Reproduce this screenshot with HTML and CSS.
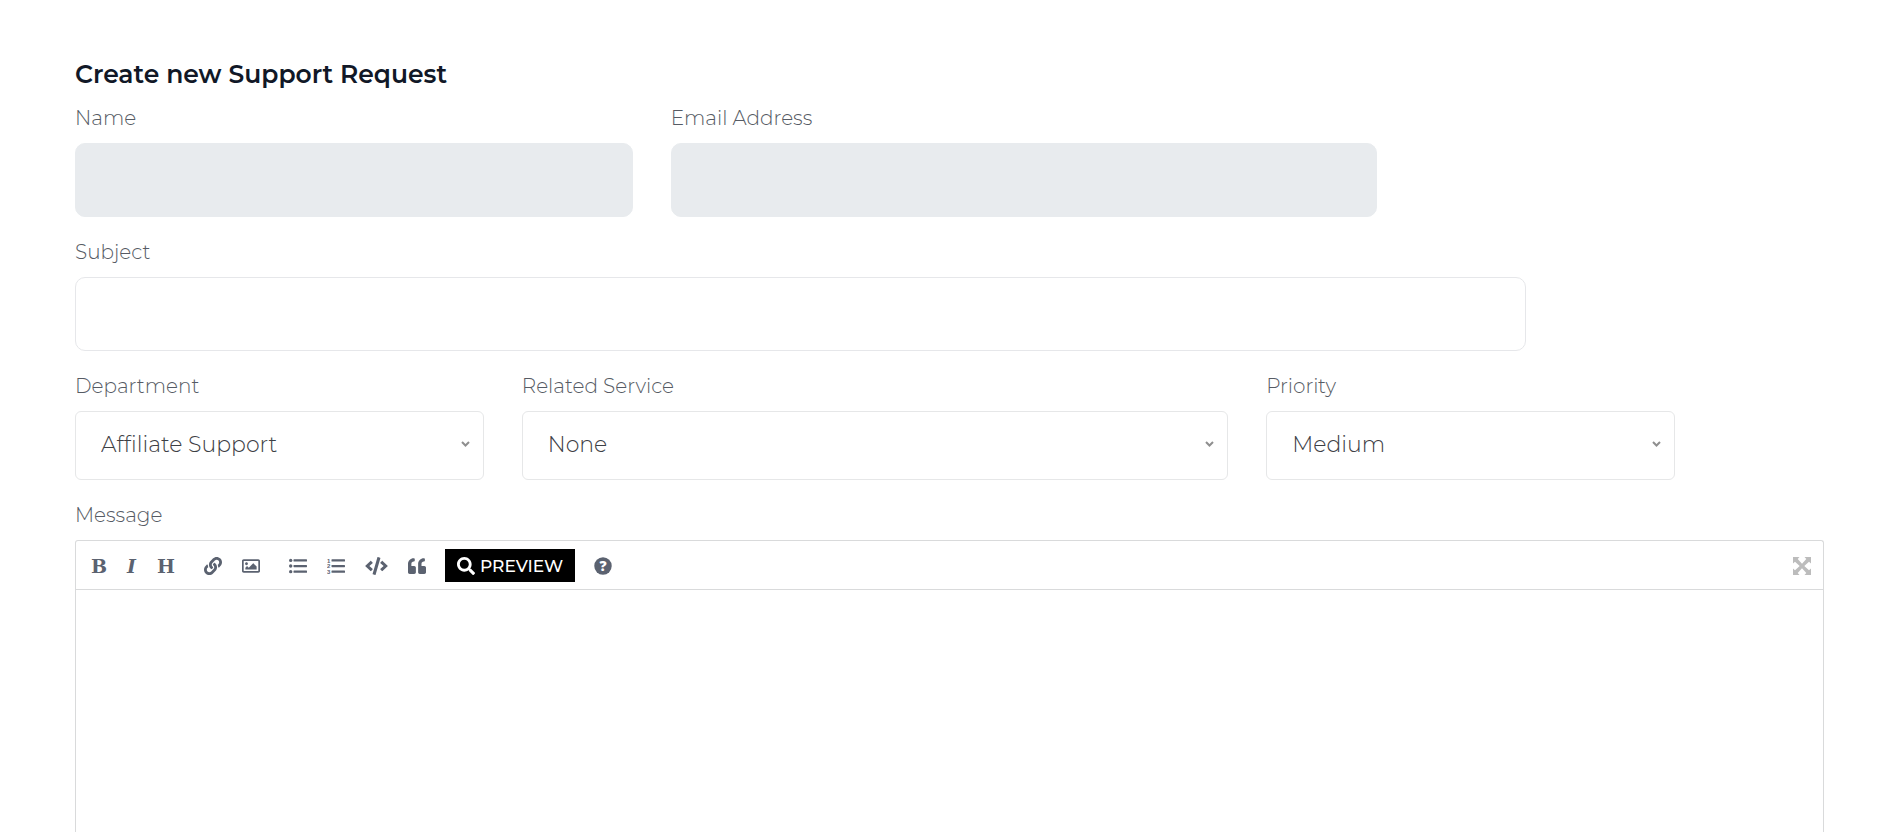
FILE: index.html
```html
<!DOCTYPE html>
<html lang="en">
<head>
<meta charset="utf-8">
<meta name="viewport" content="width=device-width, initial-scale=1">
<title>Create new Support Request</title>
<link rel="stylesheet" href="styles.css">
</head>
<body>
<main class="page">
  <h1 class="title">Create new Support Request</h1>
  <form class="form">
    <div class="field span-4">
      <label for="name">Name</label>
      <input class="control" id="name" type="text" disabled>
    </div>
    <div class="field span-5">
      <label for="email">Email Address</label>
      <input class="control" id="email" type="email" disabled>
    </div>
    <div class="field span-10 new-row">
      <label for="subject">Subject</label>
      <input class="control" id="subject" type="text">
    </div>
    <div class="field span-3 new-row">
      <label for="department">Department</label>
      <div class="select">
        <select id="department"><option>Affiliate Support</option></select>
        <svg class="chevron" viewBox="0 0 9 6" aria-hidden="true"><path d="M1 1l3.500 3.500L8 1"/></svg>
      </div>
    </div>
    <div class="field span-5">
      <label for="service">Related Service</label>
      <div class="select">
        <select id="service"><option>None</option></select>
        <svg class="chevron" viewBox="0 0 9 6" aria-hidden="true"><path d="M1 1l3.500 3.500L8 1"/></svg>
      </div>
    </div>
    <div class="field span-3">
      <label for="priority">Priority</label>
      <div class="select">
        <select id="priority"><option>Medium</option></select>
        <svg class="chevron" viewBox="0 0 9 6" aria-hidden="true"><path d="M1 1l3.500 3.500L8 1"/></svg>
      </div>
    </div>
    <div class="field field-message">
      <label for="message">Message</label>
      <div class="editor">
        <div class="toolbar">
          <div class="group">
            <button class="tool tool-bold" type="button" title="Bold">B</button>
            <button class="tool tool-italic" type="button" title="Italic">I</button>
            <button class="tool tool-heading" type="button" title="Heading">H</button>
          </div>
          <div class="group">
            <button class="tool" type="button" aria-label="Link"><svg class="icon" viewBox="0 0 512 512"><path d="M326.612 185.391c59.747 59.809 58.927 155.698.36 214.59-.11.12-.24.25-.36.37l-67.2 67.2c-59.27 59.27-155.699 59.262-214.96 0-59.27-59.26-59.27-155.7 0-214.96l37.106-37.106c9.84-9.84 26.786-3.3 27.294 10.606.648 17.722 3.826 35.527 9.69 52.721 1.986 5.822.567 12.262-3.783 16.612l-13.087 13.087c-28.026 28.026-28.905 73.66-1.155 101.96 28.024 28.579 74.086 28.749 102.325.51l67.2-67.19c28.191-28.191 28.073-73.757 0-101.83-3.701-3.694-7.429-6.564-10.341-8.569a16.037 16.037 0 0 1-6.947-12.606c-.396-10.567 3.348-21.456 11.698-29.806l21.054-21.055c5.521-5.521 14.182-6.199 20.584-1.731a152.482 152.482 0 0 1 20.522 17.197zM467.547 44.449c-59.261-59.262-155.69-59.27-214.96 0l-67.2 67.2c-.12.12-.25.25-.36.37-58.566 58.892-59.387 154.781.36 214.59a152.454 152.454 0 0 0 20.521 17.196c6.402 4.468 15.064 3.789 20.584-1.731l21.054-21.055c8.35-8.35 12.094-19.239 11.698-29.806a16.037 16.037 0 0 0-6.947-12.606c-2.912-2.005-6.64-4.875-10.341-8.569-28.073-28.073-28.191-73.639 0-101.83l67.2-67.19c28.239-28.239 74.3-28.069 102.325.51 27.75 28.3 26.872 73.934-1.155 101.96l-13.087 13.087c-4.35 4.35-5.769 10.79-3.783 16.612 5.864 17.194 9.042 34.999 9.69 52.721.509 13.906 17.454 20.446 27.294 10.606l37.106-37.106c59.271-59.259 59.271-155.699.001-214.959z"/></svg></button>
            <button class="tool" type="button" aria-label="Image"><svg class="icon" viewBox="0 0 512 512"><path d="M464 64H48C21.49 64 0 85.49 0 112v288c0 26.51 21.49 48 48 48h416c26.51 0 48-21.49 48-48V112c0-26.51-21.49-48-48-48zm-6 336H54a6 6 0 0 1-6-6V118a6 6 0 0 1 6-6h404a6 6 0 0 1 6 6v276a6 6 0 0 1-6 6zM128 152c-22.091 0-40 17.909-40 40s17.909 40 40 40 40-17.909 40-40-17.909-40-40-40zM96 352h320v-80l-87.515-87.515c-4.686-4.686-12.284-4.686-16.971 0L192 304l-39.515-39.515c-4.686-4.686-12.284-4.686-16.971 0L96 304v48z"/></svg></button>
          </div>
          <div class="group">
            <button class="tool" type="button" aria-label="Unordered list"><svg class="icon" viewBox="0 0 512 512"><circle cx="48" cy="96" r="48"/><circle cx="48" cy="256" r="48"/><circle cx="48" cy="416" r="48"/><rect x="128" y="64" width="384" height="64" rx="16"/><rect x="128" y="224" width="384" height="64" rx="16"/><rect x="128" y="384" width="384" height="64" rx="16"/></svg></button>
            <button class="tool" type="button" aria-label="Ordered list"><svg class="icon" viewBox="0 0 512 512"><rect x="128" y="64" width="384" height="64" rx="16"/><rect x="128" y="224" width="384" height="64" rx="16"/><rect x="128" y="384" width="384" height="64" rx="16"/><g class="numerals"><text x="44" y="160">1</text><text x="44" y="322">2</text><text x="44" y="484">3</text></g></svg></button>
            <button class="tool" type="button" aria-label="Code"><svg class="icon icon-code" viewBox="0 0 640 512"><path d="M278.9 511.5l-61-17.7c-6.4-1.8-10-8.5-8.2-14.9L346.2 8.7c1.8-6.4 8.5-10 14.9-8.2l61 17.7c6.4 1.8 10 8.5 8.2 14.9L293.8 503.3c-1.9 6.4-8.5 10.1-14.9 8.2zm-114-112.2l43.5-46.4c4.6-4.9 4.3-12.7-.8-17.2L117 256l90.6-79.7c5.1-4.5 5.5-12.3.8-17.2l-43.5-46.4c-4.5-4.8-12.1-5.1-17-.5L3.8 247.2c-5.1 4.7-5.1 12.8 0 17.5l144.1 135.1c4.9 4.6 12.5 4.4 17-.5zm327.2.6l144.1-135.1c5.1-4.7 5.1-12.8 0-17.5L492.1 112.1c-4.8-4.5-12.4-4.3-17 .5L431.6 159c-4.6 4.9-4.3 12.7.8 17.2L523 256l-90.6 79.7c-5.1 4.5-5.5 12.3-.8 17.2l43.5 46.4c4.5 4.9 12.1 5.1 17 .6z"/></svg></button>
            <button class="tool" type="button" aria-label="Quote"><svg class="icon" viewBox="0 0 512 512"><path d="M464 256h-80v-64c0-35.3 28.7-64 64-64h8c13.3 0 24-10.7 24-24V56c0-13.3-10.7-24-24-24h-8c-88.4 0-160 71.6-160 160v240c0 26.5 21.500 48 48 48h128c26.5 0 48-21.5 48-48V304c0-26.500-21.500-48-48-48zm-288 0H96v-64c0-35.3 28.7-64 64-64h8c13.3 0 24-10.7 24-24V56c0-13.3-10.7-24-24-24h-8C71.6 32 0 103.6 0 192v240c0 26.5 21.5 48 48 48h128c26.5 0 48-21.5 48-48V304c0-26.5-21.5-48-48-48z"/></svg></button>
          </div>
          <button class="preview" type="button"><svg class="icon" viewBox="0 0 512 512" aria-hidden="true"><path d="M505 442.7L405.3 343c-4.5-4.5-10.6-7-17-7H372c27.6-35.3 44-79.7 44-128C416 93.1 322.9 0 208 0S0 93.1 0 208s93.1 208 208 208c48.3 0 92.7-16.4 128-44v16.3c0 6.4 2.5 12.5 7 17l99.7 99.7c9.4 9.4 24.6 9.4 33.9 0l28.3-28.3c9.4-9.4 9.4-24.6.1-34zM208 336c-70.7 0-128-57.2-128-128 0-70.7 57.2-128 128-128 70.7 0 128 57.2 128 128 0 70.7-57.2 128-128 128z"/></svg>PREVIEW</button>
          <button class="tool" type="button" aria-label="Help"><svg class="icon" viewBox="0 0 512 512"><circle cx="256" cy="256" r="248"/><text class="help-mark" x="256" y="402">?</text></svg></button>
          <button class="tool tool-expand" type="button" aria-label="Full screen"><svg class="icon" viewBox="0 0 18 18"><path d="M0 0h6.500L4.700 2 9 6.700 13.300 2 11.500 0H18v6.500L16 4.700 11.300 9l4.700 4.300 2-1.800V18h-6.500l1.800-2L9 11.300 4.700 16l1.800 2H0v-6.500l2 1.800L6.700 9 2 4.700 0 6.500z"/></svg></button>
        </div>
        <textarea id="message"></textarea>
      </div>
    </div>
  </form>
</main>
</body>
</html>
```
FILE: styles.css
```css
* {
  box-sizing: border-box;
}

body {
  margin: 0;
  background: #fff;
  color: #565b64;
  font-family: Montserrat, Inter, "Open Sans", sans-serif;
}

.page {
  display: flex;
  flex-direction: column;
  min-height: 100vh;
  padding: 57px 72px 0 75px;
}

.title {
  margin: 0 0 12px;
  color: #111827;
  font-size: 25px;
  font-weight: 600;
  line-height: 34px;
}

.form {
  flex: 1;
  display: grid;
  grid-template-columns: repeat(12, minmax(0, 1fr));
  grid-template-rows: auto auto auto 1fr;
  gap: 20px 38px;
}

.field {
  display: flex;
  flex-direction: column;
  gap: 10px;
}

.span-3 { grid-column-end: span 3; }
.span-4 { grid-column-end: span 4; }
.span-5 { grid-column-end: span 5; }
.span-10 { grid-column-end: span 10; }
.new-row { grid-column-start: 1; }
.field-message { grid-column: 1 / -1; }

label {
  font-size: 20px;
  font-weight: 300;
  line-height: 30px;
}

.control {
  width: 100%;
  height: 74px;
  padding: 0 24px;
  border: 1px solid #e6e7ea;
  border-radius: 10px;
  background: #fff;
  color: #3f4651;
  font: inherit;
  font-size: 22px;
}

.control:disabled {
  border-color: #e8ebee;
  background: #e8ebee;
}

.select {
  position: relative;
}

select {
  display: block;
  width: 100%;
  height: 69px;
  padding: 0 40px 2px 25px;
  appearance: none;
  border: 1px solid #e6e7e8;
  border-radius: 6px;
  background: #fff;
  color: #3d4045;
  font-family: inherit;
  font-size: 22px;
  font-weight: 300;
}

.chevron {
  position: absolute;
  top: 30px;
  right: 14px;
  width: 9px;
  height: 6px;
  fill: none;
  stroke: #8f8f8f;
  stroke-width: 2;
  pointer-events: none;
}

.editor {
  flex: 1;
  display: flex;
  flex-direction: column;
  border: 1px solid #d9dadb;
  border-bottom: 0;
  border-radius: 3px 3px 0 0;
}

.toolbar {
  display: flex;
  align-items: center;
  gap: 9px;
  padding: 8px 2px 7px 6px;
  border-bottom: 1px solid #d9dadb;
}

.group {
  display: flex;
}

.tool {
  display: flex;
  align-items: center;
  justify-content: center;
  height: 33px;
  padding: 0 10px;
  border: 0;
  background: none;
  color: #5b6270;
}

.tool-bold,
.tool-italic,
.tool-heading {
  width: 34px;
  padding: 0;
  font-family: "DejaVu Serif", serif;
  font-size: 19px;
  font-weight: 700;
}

.tool-italic {
  width: 31px;
  font-style: italic;
}

.tool-heading {
  width: 38px;
}

.icon {
  display: block;
  width: 18px;
  height: 18px;
  fill: currentColor;
}

.icon-code {
  width: 23px;
}

.numerals {
  font-family: "Liberation Sans", sans-serif;
  font-size: 170px;
  font-weight: 700;
  text-anchor: middle;
}

.help-mark {
  fill: #fff;
  font-family: "Open Sans", sans-serif;
  font-size: 400px;
  font-weight: 800;
  text-anchor: middle;
}

.preview {
  display: flex;
  align-items: center;
  gap: 5px;
  height: 33px;
  padding: 0 12px;
  border: 0;
  background: #000;
  color: #fff;
  font-family: inherit;
  font-size: 17px;
  font-weight: 500;
}

.tool-expand {
  margin-left: auto;
  color: #bcbcbc;
}

textarea {
  flex: 1;
  display: block;
  width: 100%;
  padding: 12px;
  border: 0;
  background: #fff;
  color: #3f4651;
  font: inherit;
  font-size: 20px;
  resize: none;
}

.control:focus,
select:focus,
textarea:focus {
  outline: 1px solid #8b95a5;
}
```
